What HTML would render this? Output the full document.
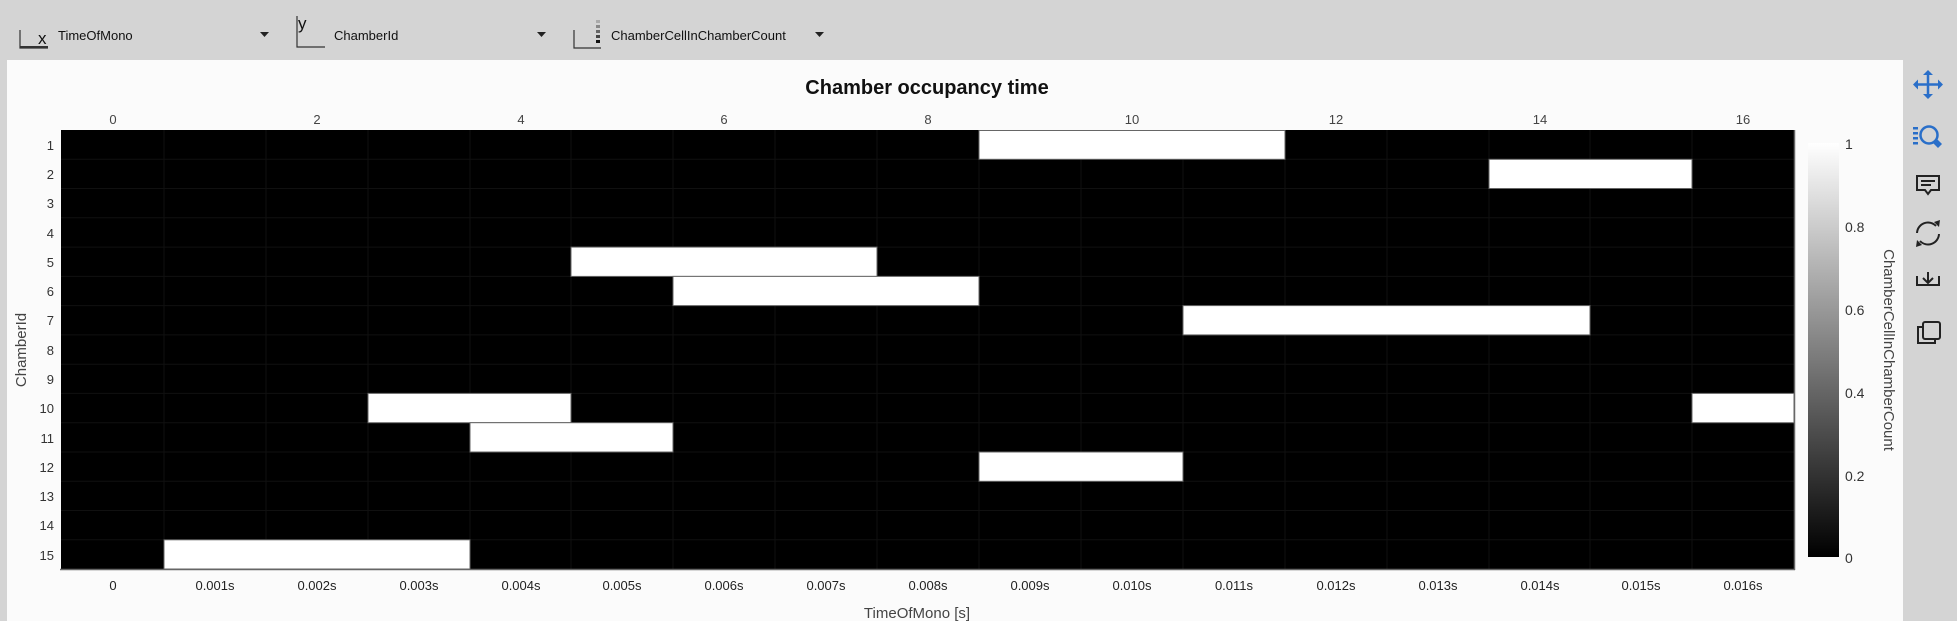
<!DOCTYPE html>
<html><head><meta charset="utf-8"><style>
html,body{margin:0;padding:0;width:1957px;height:621px;overflow:hidden;background:#d4d4d4;font-family:"Liberation Sans",sans-serif}
svg{position:absolute;left:0;top:0}
</style></head><body>
<svg width="1957" height="621" xmlns="http://www.w3.org/2000/svg" font-family="Liberation Sans, sans-serif">
<rect x="0" y="0" width="1957" height="621" fill="#d4d4d4"/>
<g fill="none" stroke="#333" stroke-width="1.2">
<path d="M20 30 V48 H48"/>
<path d="M297 16 V47 H325" />
<path d="M574 30 V48 H601"/>
</g>
<rect x="20" y="46" width="28" height="2" fill="#333"/>
<text x="38" y="44" font-size="17" fill="#111">x</text>
<text x="298" y="29" font-size="17" fill="#111">y</text>
<g><rect x="596" y="20" width="4" height="3" fill="#aaa"/><rect x="596" y="25" width="4" height="3" fill="#888"/><rect x="596" y="30" width="4" height="3" fill="#666"/><rect x="596" y="35" width="4" height="3" fill="#444"/><rect x="596" y="40" width="4" height="3" fill="#111"/></g>
<g font-size="13" fill="#111">
<text x="58" y="40">TimeOfMono</text>
<text x="334" y="40">ChamberId</text>
<text x="611" y="40">ChamberCellInChamberCount</text>
</g>
<g fill="#222"><path d="M260 32 h9 l-4.5 5z"/><path d="M537 32 h9 l-4.5 5z"/><path d="M815 32 h9 l-4.5 5z"/></g>
<rect x="7" y="60" width="1896" height="561" fill="#fbfbfb"/>
<text x="927" y="94" font-size="20" font-weight="bold" text-anchor="middle" fill="#111">Chamber occupancy time</text>
<g font-size="13" fill="#444" text-anchor="middle">
<text x="113" y="124">0</text><text x="317" y="124">2</text><text x="521" y="124">4</text><text x="724" y="124">6</text><text x="928" y="124">8</text><text x="1132" y="124">10</text><text x="1336" y="124">12</text><text x="1540" y="124">14</text><text x="1743" y="124">16</text>
</g>
<rect x="61" y="130" width="1733" height="439" fill="#000"/>
<g stroke="#101010" stroke-width="1">
<path d="M164 130V569M266 130V569M368 130V569M470 130V569M571 130V569M673 130V569M775 130V569M877 130V569M979 130V569M1081 130V569M1183 130V569M1285 130V569M1387 130V569M1489 130V569M1590 130V569M1692 130V569"/>
<path d="M61 159.3H1794M61 188.5H1794M61 217.8H1794M61 247.1H1794M61 276.4H1794M61 305.6H1794M61 334.9H1794M61 364.2H1794M61 393.4H1794M61 422.7H1794M61 452H1794M61 481.3H1794M61 510.5H1794M61 539.8H1794"/>
</g>
<g fill="#fff" stroke="#666" stroke-width="1">
<rect x="979" y="130.5" width="306" height="28.8"/>
<rect x="1489" y="159.3" width="203" height="29.2"/>
<rect x="571" y="247.1" width="306" height="29.3"/>
<rect x="673" y="276.4" width="306" height="29.2"/>
<rect x="1183" y="305.6" width="407" height="29.3"/>
<rect x="368" y="393.4" width="203" height="29.3"/>
<rect x="1692" y="393.4" width="102" height="29.3"/>
<rect x="470" y="422.7" width="203" height="29.3"/>
<rect x="979" y="452" width="204" height="29.3"/>
<rect x="164" y="539.8" width="306" height="29.2"/>
</g>
<path d="M60 569.5H1795M1794.5 130V570" stroke="#666" stroke-width="1.5"/>
<g font-size="13" fill="#333" text-anchor="end">
<text x="54" y="150">1</text><text x="54" y="179">2</text><text x="54" y="208">3</text><text x="54" y="238">4</text><text x="54" y="267">5</text><text x="54" y="296">6</text><text x="54" y="325">7</text><text x="54" y="355">8</text><text x="54" y="384">9</text><text x="54" y="413">10</text><text x="54" y="443">11</text><text x="54" y="472">12</text><text x="54" y="501">13</text><text x="54" y="530">14</text><text x="54" y="560">15</text>
</g>
<text transform="translate(26,350) rotate(-90)" font-size="15" fill="#444" text-anchor="middle">ChamberId</text>
<g font-size="13" fill="#222" text-anchor="middle">
<text x="113" y="590">0</text><text x="215" y="590">0.001s</text><text x="317" y="590">0.002s</text><text x="419" y="590">0.003s</text><text x="521" y="590">0.004s</text><text x="622" y="590">0.005s</text><text x="724" y="590">0.006s</text><text x="826" y="590">0.007s</text><text x="928" y="590">0.008s</text><text x="1030" y="590">0.009s</text><text x="1132" y="590">0.010s</text><text x="1234" y="590">0.011s</text><text x="1336" y="590">0.012s</text><text x="1438" y="590">0.013s</text><text x="1540" y="590">0.014s</text><text x="1641" y="590">0.015s</text><text x="1743" y="590">0.016s</text>
</g>
<text x="917" y="618" font-size="15" fill="#444" text-anchor="middle">TimeOfMono [s]</text>
<defs><linearGradient id="g" x1="0" y1="0" x2="0" y2="1"><stop offset="0" stop-color="#fff"/><stop offset="1" stop-color="#000"/></linearGradient></defs>
<rect x="1808" y="143" width="31" height="414" fill="url(#g)"/>
<g font-size="14" fill="#333">
<text x="1845" y="149">1</text><text x="1845" y="232">0.8</text><text x="1845" y="315">0.6</text><text x="1845" y="398">0.4</text><text x="1845" y="481">0.2</text><text x="1845" y="563">0</text>
</g>
<text transform="translate(1884,350) rotate(90)" font-size="15" fill="#444" text-anchor="middle">ChamberCellInChamberCount</text>
<g fill="none" stroke="#2a6fc9" stroke-width="2.5">
<path d="M1928 72V97M1915 84.5H1941"/>
</g>
<g fill="#2a6fc9">
<path d="M1928 70l-5 5h10z M1928 99l-5-5h10z M1913 84.5l5-5v10z M1943 84.5l-5-5v10z"/>
<rect x="1913" y="127" width="5" height="2.5"/><rect x="1913" y="132" width="5" height="2.5"/><rect x="1913" y="137" width="5" height="2.5"/><rect x="1913" y="142" width="5" height="2.5"/>
<path d="M1933 143l5 5 4-4-5-5z"/>
</g>
<circle cx="1929" cy="135" r="8.5" fill="none" stroke="#2a6fc9" stroke-width="2.5"/>
<g fill="none" stroke="#222" stroke-width="2">
<path d="M1917 176h22v14h-8l-3 4-3-4h-8z"/>
<path d="M1921 181h14M1921 185h10"/>
<path d="M1917 233a11 11 0 0 1 19-7M1939 234a11 11 0 0 1-19 7"/>
<path d="M1917 276v9h22v-9M1928 272v10M1923 278l5 5 5-5"/>
<rect x="1923" y="322" width="17" height="17" rx="2"/>
<path d="M1923 327h-5v16h17v-4"/>
</g>
<g fill="#222"><path d="M1934 222l6-2-1 7z"/><path d="M1922 245l-6 2 1-7z"/></g>
</svg>
</body></html>
